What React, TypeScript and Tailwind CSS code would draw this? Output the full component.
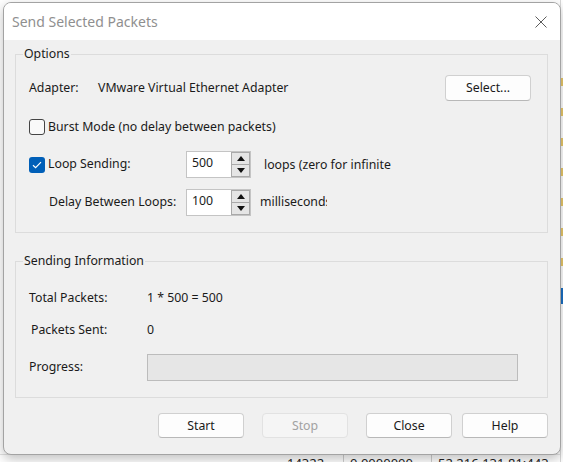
import type React from "react";

function cn(...parts: (string | false | undefined)[]) {
  return parts.filter(Boolean).join(" ");
}

function GroupBox({
  title,
  className,
  children,
}: {
  title: string;
  className?: string;
  children: React.ReactNode;
}) {
  return (
    <div className={cn("relative border border-[#dcdcdc]", className)}>
      <span className="absolute -top-[9px] left-[7px] bg-[#f0f0f0] px-[1px] leading-[16px]">
        {title}
      </span>
      {children}
    </div>
  );
}

function Checkbox({ checked }: { checked?: boolean }) {
  if (checked) {
    return (
      <span className="flex h-[16px] w-[16px] items-center justify-center rounded-[3px] bg-[#005fb8]">
        <svg width="10" height="8" viewBox="0 0 10 8" fill="none">
          <path d="M1 4.2 3.6 6.6 9 1.2" stroke="white" strokeWidth="1.2" />
        </svg>
      </span>
    );
  }
  return (
    <span className="h-[16px] w-[16px] rounded-[3px] border border-[#444] bg-[#f9f9f9]" />
  );
}

function SpinBox({ value }: { value: string }) {
  return (
    <div className="flex h-[27px] w-[65px] shrink-0 border border-[#c4c4c4] bg-white">
      <div className="flex-1 pl-[5px] pt-[3px] leading-[16px]">{value}</div>
      <div className="flex w-[19px] flex-col">
        <div className="flex flex-1 items-center justify-center border border-[#a9a9a9] bg-[#e5e5e5]">
          <svg width="8" height="5" viewBox="0 0 8 5">
            <path d="M0 5 4 0 8 5Z" fill="#111" />
          </svg>
        </div>
        <div className="flex flex-1 items-center justify-center border border-t-0 border-[#a9a9a9] bg-[#e5e5e5]">
          <svg width="8" height="5" viewBox="0 0 8 5">
            <path d="M0 0 4 5 8 0Z" fill="#111" />
          </svg>
        </div>
      </div>
    </div>
  );
}

function Button({
  children,
  disabled,
  className,
}: {
  children: React.ReactNode;
  disabled?: boolean;
  className?: string;
}) {
  return (
    <button
      type="button"
      className={cn(
        "h-[25px] w-[86px] rounded-[4px] border text-center leading-[16px]",
        disabled
          ? "border-[#e2e2e2] bg-[#f5f5f5] text-[#a2a2a2]"
          : "border-[#d0d0d0] border-b-[#b8b8b8] bg-[#fdfdfd] text-[#1a1a1a]",
        className,
      )}
    >
      {children}
    </button>
  );
}

function SendDialog() {
  return (
    <div className="absolute left-[3px] top-[2px] h-[453px] w-[558px] overflow-hidden rounded-[8px] border border-[#a3a3a3] bg-[#f0f0f0] shadow-[0_4px_12px_rgba(0,0,0,0.25)]">
      <div className="flex h-[37px] items-center justify-between bg-white pl-[8px] pr-[13px]">
        <span className="text-[14px] text-[#8f8f8f]">Send Selected Packets</span>
        <svg width="12" height="12" viewBox="0 0 12 12">
          <path d="M0.5 0.5 11.5 11.5M11.5 0.5 0.5 11.5" stroke="#5c5c5c" strokeWidth="1" />
        </svg>
      </div>

      <div className="flex flex-col pl-[11px] pr-[12px] text-[12.3px] text-[#1a1a1a]">
        <GroupBox title="Options" className="mt-[14px] pb-[16px] pl-[13px] pr-[16px] pt-[20px]">
          <div className="flex h-[26px] items-center">
            <span className="w-[69px]">Adapter:</span>
            <span>VMware Virtual Ethernet Adapter</span>
            <Button className="ml-auto h-[26px]">Select...</Button>
          </div>

          <div className="mt-[18px] flex h-[16px] items-center gap-[3px]">
            <Checkbox />
            <span>Burst Mode (no delay between packets)</span>
          </div>

          <div className="mt-[16px] flex h-[27px] items-center">
            <div className="flex w-[157px] shrink-0 items-center gap-[3px]">
              <Checkbox checked />
              <span>Loop Sending:</span>
            </div>
            <SpinBox value="500" />
            <span className="ml-[13px] mt-[2px]">loops (zero for infinite</span>
          </div>

          <div className="mt-[11px] flex h-[27px] items-center">
            <span className="w-[157px] shrink-0 pl-[20px]">Delay Between Loops:</span>
            <SpinBox value="100" />
            <span className="ml-[9px] w-[67px] overflow-hidden whitespace-nowrap">milliseconds</span>
          </div>
        </GroupBox>

        <GroupBox title="Sending Information" className="mt-[28px] pb-[16px] pl-[13px] pt-[28px]">
          <div className="flex h-[16px] items-center">
            <span className="w-[118px]">Total Packets:</span>
            <span>1 * 500 = 500</span>
          </div>
          <div className="mt-[16px] flex h-[16px] items-center">
            <span className="w-[118px] pl-[2px]">Packets Sent:</span>
            <span>0</span>
          </div>
          <div className="mt-[16px] flex h-[27px] items-center">
            <span className="w-[118px]">Progress:</span>
            <div className="h-[27px] w-[371px] border border-[#bcbcbc] bg-[#e6e6e6]" />
          </div>
        </GroupBox>

        <div className="mt-[15px] flex justify-end">
          <Button>Start</Button>
          <Button disabled className="ml-[18px]">
            Stop
          </Button>
          <Button className="ml-[18px]">Close</Button>
          <Button className="ml-[10px]">Help</Button>
        </div>
      </div>
    </div>
  );
}

export default function App() {
  return (
    <div className="relative h-[462px] w-[563px] overflow-hidden bg-white font-['Segoe_UI','Noto_Sans',sans-serif]">
      {/* packet list behind the dialog */}
      <div className="flex h-full">
        <div className="flex flex-1 flex-col justify-end">
          <div className="flex h-[8px] border-t border-[#e3e3e3] pl-[287px] text-[13px] leading-[16px] text-[#222]">
            <span className="w-[57px] border-r border-[#cfcfcf]">14322</span>
            <span className="w-[88px] border-r border-[#cfcfcf] pl-[6px]">0.0000000</span>
            <span className="pl-[6px]">52.216.131.81:443</span>
          </div>
        </div>
        <div className="flex w-[3px] flex-col gap-[22px] border-l border-[#d8d8d8] pt-[78px]">
          <div className="h-[8px] bg-[#e8c86a]" />
          <div className="h-[8px] bg-[#e8c86a]" />
          <div className="h-[8px] bg-[#e8c86a]" />
          <div className="h-[8px] bg-[#e8c86a]" />
          <div className="h-[8px] bg-[#e8c86a]" />
          <div className="h-[8px] bg-[#e8c86a]" />
          <div className="h-[8px] bg-[#e8c86a]" />
          <div className="h-[16px] bg-[#1a6fc4]" />
        </div>
      </div>

      <SendDialog />
    </div>
  );
}
